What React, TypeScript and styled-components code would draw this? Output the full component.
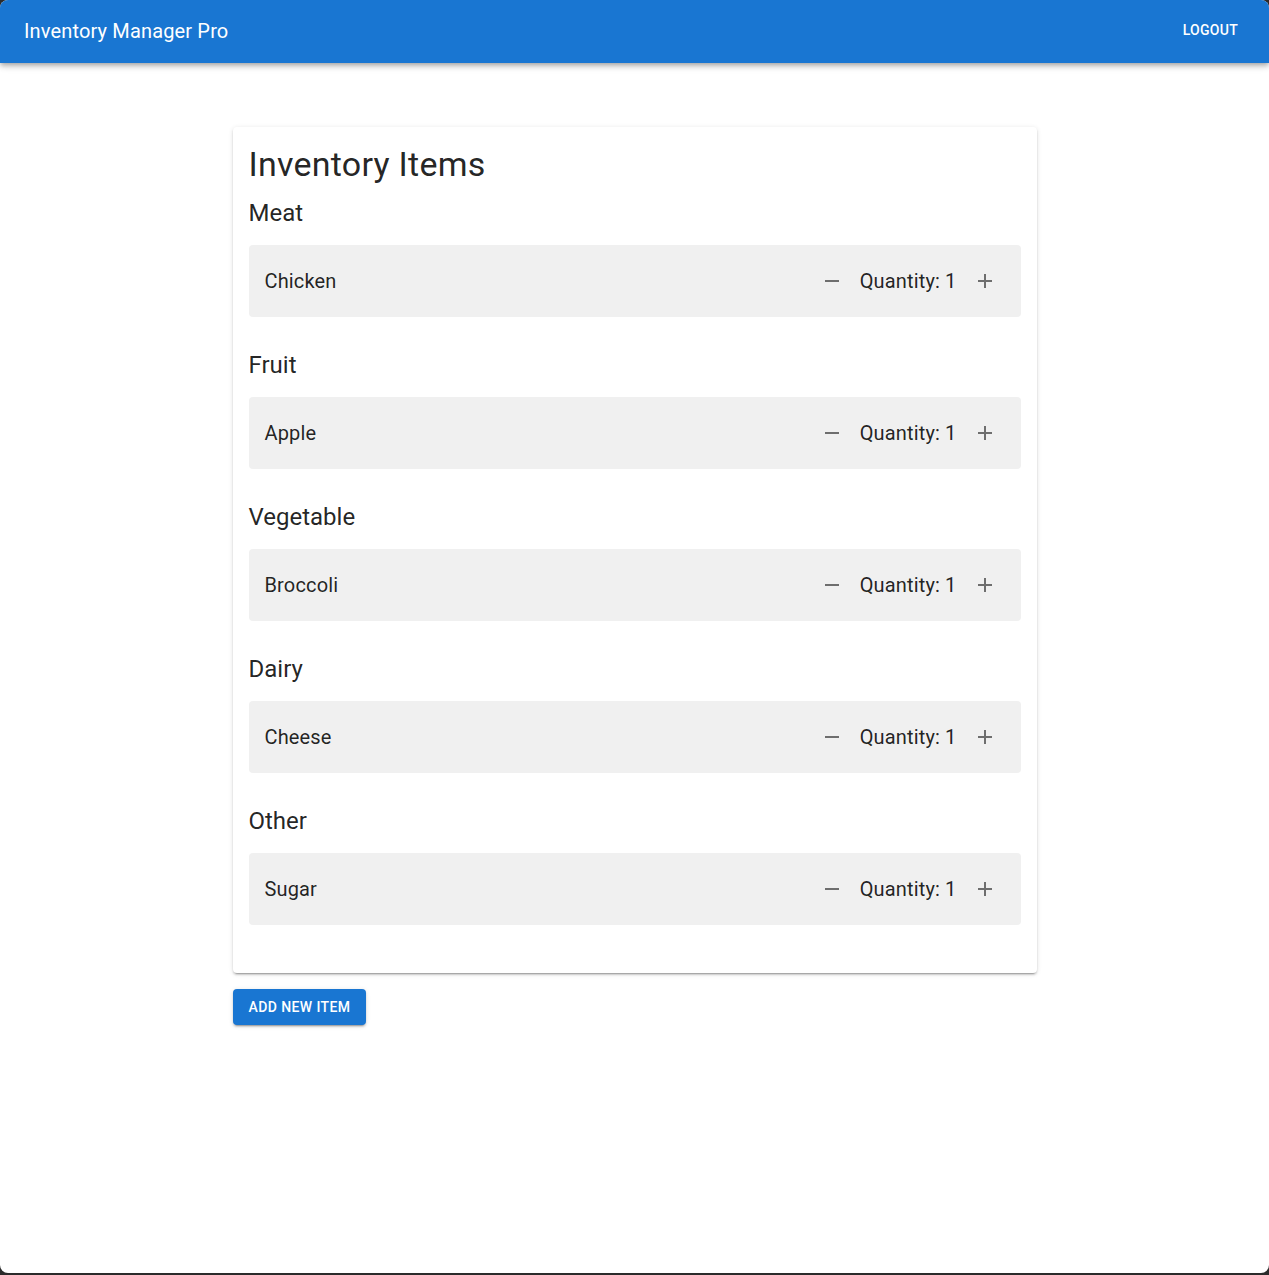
import React, { useState } from "react";
import styled, { createGlobalStyle } from "styled-components";

const GlobalStyle = createGlobalStyle`
  html { background: #2b2b2b; }
  body {
    margin: 0;
    font-family: Roboto, "Helvetica Neue", Arial, sans-serif;
    color: rgba(0, 0, 0, 0.87);
  }
  * { box-sizing: border-box; }
`;

const Frame = styled.div`
  min-height: 1273px;
  background: #fff;
  border-radius: 8px;
  overflow: hidden;
`;

const AppBar = styled.header`
  height: 63px;
  background: #1976d2;
  color: #fff;
  display: flex;
  align-items: center;
  justify-content: space-between;
  padding: 0 24px 2px;
  box-shadow: 0px 2px 4px -1px rgba(0, 0, 0, 0.2), 0px 4px 5px 0px rgba(0, 0, 0, 0.14),
    0px 1px 10px 0px rgba(0, 0, 0, 0.12);
  position: relative;
  z-index: 1;
`;

const Brand = styled.h6`
  margin: 0;
  font-size: 20px;
  font-weight: 400;
  line-height: 1.6;
  letter-spacing: 0.0075em;
`;

const TextButton = styled.button`
  background: transparent;
  border: 0;
  color: #fff;
  font-family: inherit;
  font-size: 14px;
  font-weight: 500;
  letter-spacing: 0.02em;
  text-transform: uppercase;
  line-height: 1.75;
  padding: 6px 8px;
  margin-right: -1px;
  border-radius: 4px;
  cursor: pointer;
`;

const Main = styled.main`
  width: 804px;
  margin: 64px auto 0;
`;

const Card = styled.section`
  background: #fff;
  border-radius: 4px;
  padding: 16px;
  box-shadow: 0px 3px 1px -2px rgba(0, 0, 0, 0.2), 0px 2px 2px 0px rgba(0, 0, 0, 0.14),
    0px 1px 5px 0px rgba(0, 0, 0, 0.12);
`;

const Title = styled.h4`
  margin: 0 0 12px;
  font-size: 34px;
  font-weight: 400;
  line-height: 42px;
  letter-spacing: 0.00735em;
`;

const Group = styled.div`
  margin-bottom: 32px;
`;

const GroupHeading = styled.h5`
  margin: 0 0 16px;
  font-size: 24px;
  font-weight: 400;
  line-height: 32px;
  letter-spacing: 0;
`;

const Row = styled.div`
  display: flex;
  align-items: center;
  justify-content: space-between;
  background: #f0f0f0;
  border-radius: 4px;
  padding: 16px;
  height: 72px;
`;

const ItemName = styled.span`
  font-size: 20px;
  line-height: 1.5;
  letter-spacing: 0.0075em;
`;

const Controls = styled.div`
  display: flex;
  align-items: center;
`;

const IconButton = styled.button`
  width: 40px;
  height: 40px;
  border: 0;
  border-radius: 50%;
  background: transparent;
  display: flex;
  align-items: center;
  justify-content: center;
  padding: 0;
  cursor: pointer;
  color: rgba(0, 0, 0, 0.54);
`;

const Quantity = styled.span`
  font-size: 20px;
  line-height: 1.5;
  letter-spacing: 0.0075em;
  margin: 0 8px;
`;

const PrimaryButton = styled.button`
  margin-top: 16px;
  background: #1976d2;
  color: #fff;
  border: 0;
  border-radius: 4px;
  font-family: inherit;
  font-size: 14px;
  font-weight: 500;
  letter-spacing: 0.02857em;
  text-transform: uppercase;
  line-height: 24px;
  padding: 6px 16px;
  cursor: pointer;
  box-shadow: 0px 3px 1px -2px rgba(0, 0, 0, 0.2), 0px 2px 2px 0px rgba(0, 0, 0, 0.14),
    0px 1px 5px 0px rgba(0, 0, 0, 0.12);
`;

const MinusIcon = () => (
  <svg width="24" height="24" viewBox="0 0 24 24" fill="currentColor">
    <path d="M19 13H5v-2h14v2z" />
  </svg>
);

const PlusIcon = () => (
  <svg width="24" height="24" viewBox="0 0 24 24" fill="currentColor">
    <path d="M19 13h-6v6h-2v-6H5v-2h6V5h2v6h6v2z" />
  </svg>
);

type Item = { category: string; name: string; qty: number };

const initial: Item[] = [
  { category: "Meat", name: "Chicken", qty: 1 },
  { category: "Fruit", name: "Apple", qty: 1 },
  { category: "Vegetable", name: "Broccoli", qty: 1 },
  { category: "Dairy", name: "Cheese", qty: 1 },
  { category: "Other", name: "Sugar", qty: 1 },
];

export default function App() {
  const [items, setItems] = useState<Item[]>(initial);
  const change = (i: number, d: number) =>
    setItems((prev) => prev.map((it, j) => (j === i ? { ...it, qty: Math.max(0, it.qty + d) } : it)));

  return (
    <Frame>
      <GlobalStyle />
      <AppBar>
        <Brand>Inventory Manager Pro</Brand>
        <TextButton>Logout</TextButton>
      </AppBar>
      <Main>
        <Card>
          <Title>Inventory Items</Title>
          {items.map((it, i) => (
            <Group key={it.category}>
              <GroupHeading>{it.category}</GroupHeading>
              <Row>
                <ItemName>{it.name}</ItemName>
                <Controls>
                  <IconButton aria-label="decrease" onClick={() => change(i, -1)}>
                    <MinusIcon />
                  </IconButton>
                  <Quantity>Quantity: {it.qty}</Quantity>
                  <IconButton aria-label="increase" onClick={() => change(i, 1)}>
                    <PlusIcon />
                  </IconButton>
                </Controls>
              </Row>
            </Group>
          ))}
        </Card>
        <PrimaryButton>Add New Item</PrimaryButton>
      </Main>
    </Frame>
  );
}
